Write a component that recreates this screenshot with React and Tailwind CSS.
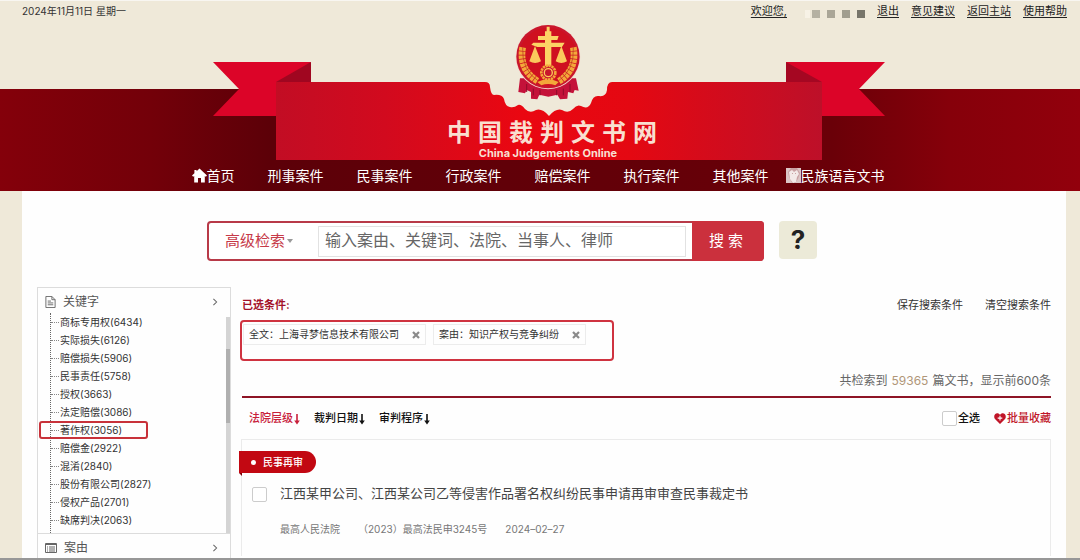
import React, { useState } from "react"

const links = ["退出", "意见建议", "返回主站", "使用帮助"]
const cases = ["刑事案件", "民事案件", "行政案件", "赔偿案件", "执行案件", "其他案件"]
const keywords = [
    ["商标专用权", 6434],
    ["实际损失", 6126],
    ["赔偿损失", 5906],
    ["民事责任", 5758],
    ["授权", 3663],
    ["法定赔偿", 3086],
    ["著作权", 3056],
    ["赔偿金", 2922],
    ["混淆", 2840],
    ["股份有限公司", 2827],
    ["侵权产品", 2701],
    ["缺席判决", 2063],
]
const title = "中国裁判文书网"

function Emblem() {
    return (
        <g transform="translate(480 10) scale(0.3333)">
            <path d="M120 205 L115 246 L135 250 L140 240 L153 246 L153 266 L172 268 L178 254 L205 260 L232 254 L240 268 L262 266 L264 246 L280 250 L284 240 L296 242 L288 205 Z" fill="#c4123a" />
            <path d="M140 222 V246 M160 236 V256 M180 240 V256 M230 240 V256 M250 236 V256 M270 222 V246" stroke="#8e0c2a" strokeWidth="3" />
            <circle cx="204" cy="141" r="97" fill="#f4d8cc" />
            <circle cx="204" cy="140" r="95" fill="#c9162c" />
            <circle cx="204" cy="140" r="87" fill="#cf1020" />
            <path d="M128 112 Q116 180 174 214" stroke="#f3a83a" strokeWidth="20" strokeDasharray="10 2" fill="none" />
            <path d="M280 112 Q292 180 236 214" stroke="#f3a83a" strokeWidth="20" strokeDasharray="10 2" fill="none" />
            <path d="M128 112 Q124 180 176 214 M280 112 Q284 180 234 214" stroke="#b5301c" strokeWidth="2" fill="none" />
            <path d="M172 216 Q204 200 236 216 L226 226 Q204 218 184 226 Z" fill="#f3a83a" />
            <path d="M200 50 H209 V64 H214 V78 H236 L232 90 H214 V98 H254 L246 111 H214 V168 H195 V111 H172 L154 104 L160 98 H195 V90 H174 V78 H195 V64 H200 Z" fill="#fcd365" />
            <path d="M165 108 L183 154 Q165 164 148 154 Z M244 108 L261 154 Q244 164 227 154 Z" fill="#fbc95c" />
            <circle cx="205" cy="188" r="21" fill="#c9162c" stroke="#f3a83a" strokeWidth="8" strokeDasharray="7 2" />
            <circle cx="205" cy="188" r="12" fill="#c9162c" stroke="#fbc95c" strokeWidth="4" />
        </g>
    )
}

function Ribbon() {
    return (
        <svg viewBox="202 22 684 138" className="h-[138px] w-[684px] [grid-area:1/1]" aria-hidden="true">
            <defs>
                <linearGradient id="band" x1="0" x2="1">
                    <stop offset="0" stopColor="#c20d24" />
                    <stop offset="0.2" stopColor="#d20a1e" />
                    <stop offset="0.45" stopColor="#ea0711" />
                    <stop offset="0.65" stopColor="#e40812" />
                    <stop offset="1" stopColor="#bd1029" />
                </linearGradient>
            </defs>
            <path d="M213 62 H311 L290 116 H213 L239 89 Z" fill="#dc0428" />
            <path d="M885 62 H786 L800 116 H885 L859 89 Z" fill="#dc0428" />
            <path d="M276 82 L311 62 V83 H276 Z" fill="#a00620" />
            <path d="M822 82 L786 62 V83 H822 Z" fill="#a50722" />
            <rect x="484" y="80" width="130" height="40" fill="#efe9d9" />
            <path
                d="M276 82 H485 Q490 82 490 87 Q491 95 494 95 Q502 94 504 99 Q505 106 510 107 Q514 108 518 105 Q521 104 525 109 Q530 114 536 110 Q542 108 549 116 Q556 108 562 110 Q568 114 573 109 Q577 104 581 106 Q588 110 591 103 Q593 95 599 96 Q606 97 607 90 Q607 82 612 82 H822 V160 H276 Z"
                fill="url(#band)"
            />
            <Emblem />
        </svg>
    )
}

function HomeIcon() {
    return (
        <svg viewBox="0 0 15 15" className="h-[15px] w-[15px]" fill="#fff" aria-hidden="true">
            <path d="M7.5 0.5 L15 7.5 L13.8 8.8 L12.8 8 V14.5 H9 V10 H6 V14.5 H2.2 V8 L1.2 8.8 L0 7.5 L2.4 5.2 V2 H4.6 V3.2 Z" />
        </svg>
    )
}

function EthnicIcon() {
    return (
        <svg viewBox="0 0 15 15" className="h-[15px] w-[15px]" aria-hidden="true">
            <rect width="15" height="15" fill="#c9a2a4" />
            <path d="M0 0 H5 L2 4 L3 9 L6 15 H0 Z M15 0 H11 L14 5 L12 11 L9 15 H15 Z" fill="#dcc6c6" />
            <path d="M3 4 L6 2 L8 4 L11 2 L13 6 L11 9 L10 14 L7 15 L4 11 Z" fill="#f3e9e8" />
            <path d="M6 6 L7 5 M9 5 L10 6" stroke="#c9a2a4" />
        </svg>
    )
}

function Arrow() {
    return (
        <svg viewBox="0 0 6 12" className="h-3 w-[6px]" fill="none" stroke="currentColor" aria-hidden="true">
            <path d="M3 1 V9" strokeWidth="1.6" />
            <path d="M0.2 7.5 H5.8 L3 11.5 Z" fill="currentColor" stroke="none" />
        </svg>
    )
}

function Chevron() {
    return (
        <svg viewBox="0 0 6 10" className="ml-auto h-2 w-[6px]" fill="none" stroke="#666" strokeWidth="1.3" aria-hidden="true">
            <path d="M1 1 L5 5 L1 9" />
        </svg>
    )
}

function Tag({ text, onRemove }) {
    return (
        <span className="flex h-[21px] items-center gap-[13px] border border-[#ececec] px-[5px] text-[#333]">
            {text}
            <button type="button" aria-label={"删除 " + text} onClick={onRemove}>
                <svg viewBox="0 0 8 8" className="h-2 w-2" stroke="#8a8a8a" strokeWidth="2.2" aria-hidden="true">
                    <path d="M1 1 L7 7 M7 1 L1 7" />
                </svg>
            </button>
        </span>
    )
}

export default function App() {
    const [tags, setTags] = useState(["全文：上海寻梦信息技术有限公司", "案由：知识产权与竞争纠纷"])

    return (
        <div className="flex min-h-screen flex-col border-t border-b-2 border-t-[#f8f6f1] border-b-[#979797] bg-[#efe9d9] font-['Inter','Noto_Sans_CJK_SC',sans-serif] text-[10px] text-[#333]">
            <header className="bg-[linear-gradient(to_bottom,#efe9d9_88px,transparent_88px),linear-gradient(to_right,#84000a,#730009_14%,#5c0008_25%,#640008_60%,#6a0008_77%,#86000a_88%,#92000c)]">
                <div className="flex h-[21px] items-center pr-[13px] pl-[22px]">
                    <span className="flex-1">2024年11月11日 星期一</span>
                    <div className="flex items-center gap-3 text-[11px] text-[#222]">
                        <a href="#user" className="underline underline-offset-2">欢迎您,</a>
                        <span className="flex items-center gap-[7px] pt-1 pl-[6px]">
                            <i className="-mr-[5px] h-2 w-[5px] bg-[#f7f2e6]" />
                            <i className="h-2 w-2 bg-[#b5b1a2]" />
                            <i className="h-2 w-2 bg-[#aaa697]" />
                            <i className="h-2 w-2 bg-[#a19e8f]" />
                            <i className="h-2 w-2 bg-[#77756a]" />
                        </span>
                        {links.map(link => (
                            <a key={link} href="#top" className="underline underline-offset-2">{link}</a>
                        ))}
                    </div>
                </div>
                <div className="pr-[14px] pl-[22px]">
                    <div className="grid justify-center">
                        <Ribbon />
                        <div className="flex flex-col items-center self-end pl-4 text-[#f9dfd0] [grid-area:1/1]">
                            <h1 className="flex gap-[7px] text-2xl leading-[26px] font-bold" aria-label={title}>
                                {title.split("").map(char => <span key={char}>{char}</span>)}
                            </h1>
                            <p className="pr-2 text-[11px] leading-[14px] font-bold">China Judgements Online</p>
                        </div>
                    </div>
                    <nav className="flex h-[31px] items-center justify-center gap-[33px] pr-3 text-sm text-white">
                        <a href="#home" className="flex items-center"><HomeIcon />首页</a>
                        {cases.map(item => <a key={item} href="#case">{item}</a>)}
                        <a href="#ethnic" className="-ml-4 flex items-center"><EthnicIcon />民族语言文书</a>
                    </nav>
                </div>
            </header>

            <main className="mr-[14px] ml-[22px] flex flex-1 flex-col bg-[#fefefe] px-[15px] pt-[30px]">
                <form className="flex justify-center gap-[15px] pr-16" onSubmit={ev => ev.preventDefault()}>
                    <div className="flex h-10 w-[557px] items-center rounded border-2 border-[#b83a48] bg-white">
                        <label className="flex flex-1 items-center pl-4 text-[#c63a48]">
                            <select aria-label="检索方式" className="appearance-none text-[15px] text-[#c63a48]">
                                <option>高级检索</option>
                            </select>
                            <svg viewBox="0 0 8 5" className="h-[5px] w-2" fill="#999" aria-hidden="true"><path d="M1 0 H7 L4 4 Z" /></svg>
                        </label>
                        <input
                            type="text"
                            aria-label="检索关键词"
                            placeholder="输入案由、关键词、法院、当事人、律师"
                            className="mr-[6px] h-[31px] w-[368px] border border-[#e2e2e2] px-[6px] pb-[3px] text-base placeholder:text-[#666]"
                        />
                        <button className="-my-[2px] -mr-[2px] h-10 w-[72px] rounded-r-sm bg-[#cb303d] pr-1 text-[15px] text-white">搜 索</button>
                    </div>
                    <button type="button" className="h-[38px] w-[38px] rounded-sm bg-[#ecead8] text-[26px] leading-none font-bold text-[#222]">?</button>
                </form>

                <div className="flex flex-1 gap-[9px] pt-[26px]">
                    <aside className="w-[194px] border border-b-0 border-[#dcdcdc]">
                        <h2 className="flex h-[25px] items-center gap-[7px] pt-[3px] pr-3 pl-[7px] text-xs text-[#555]">
                            <svg viewBox="0 0 11 13" className="h-3 w-[11px]" fill="none" stroke="#666" aria-hidden="true">
                                <path d="M0.5 0.5 H7 L10.5 4 V12.5 H0.5 Z M7 0.5 V4 H10.5 M2.5 5.5 H6 M2.5 7.5 H8.5 M2.5 9.5 H8.5" />
                            </svg>
                            关键字
                            <Chevron />
                        </h2>
                        <div className="flex h-[220px]">
                            <ul className="ml-3 flex-1 self-stretch border-l border-dotted border-[#666]">
                                {keywords.map(([name, count]) => (
                                    <li key={name} className="relative flex h-[18px] items-center gap-px before:w-[8px] before:border-t before:border-dotted before:border-[#888]">
                                        <a href="#kw">{name}({count})</a>
                                        {name === "著作权" && <span className="absolute -left-3 h-[18px] w-[109px] rounded-[3px] border-2 border-[#c8323a]" />}
                                    </li>
                                ))}
                            </ul>
                            <div className="mt-1 flex w-1 flex-col bg-[#d4d4d4]">
                                <span className="mt-8 h-[74px] bg-[#b0b0b0]" />
                            </div>
                        </div>
                        <h2 className="flex h-[25px] items-center gap-[7px] border-t border-[#dcdcdc] pt-1 pr-3 pl-[7px] text-xs text-[#555]">
                            <svg viewBox="0 0 12 10" className="h-[10px] w-3" fill="none" stroke="#666" aria-hidden="true">
                                <path d="M0.5 0.5 H11.5 V9.5 H0.5 Z M0.5 1.5 H11.5 M2 4 H3 M4 4 H10 M2 6 H3 M4 6 H10 M2 8 H3 M4 8 H10" />
                            </svg>
                            案由
                            <Chevron />
                        </h2>
                    </aside>

                    <section className="min-w-0 flex-1 pt-1">
                        <div className="flex h-[29px] items-center gap-[22px] pl-[2px]">
                            <b className="flex-1 text-[11px] text-[#a3122a]">已选条件:</b>
                            <button type="button" className="text-[11px]">保存搜索条件</button>
                            <button type="button" className="text-[11px]" onClick={() => setTags([])}>清空搜索条件</button>
                        </div>
                        <div className="flex h-[41px] w-[374px] items-start gap-[7px] rounded border-2 border-[#cf3340] p-px pt-[2px]">
                            {tags.map(tag => (
                                <Tag key={tag} text={tag} onRemove={() => setTags(tags.filter(t => t !== tag))} />
                            ))}
                        </div>
                        <p className="ml-[2px] flex h-[37px] items-center justify-end gap-1 border-b-2 border-[#8e1425] pt-1 text-xs text-[#666]">
                            共检索到 <span className="text-[#b09678]">59365</span> 篇文书，显示前600条
                        </p>
                        <div className="flex h-[41px] items-center gap-[14px] pl-[9px] text-[11px] font-medium text-[#111]">
                            <button type="button" className="flex items-center gap-px text-[#c8203a]">法院层级<Arrow /></button>
                            <button type="button" className="flex items-center gap-px">裁判日期<Arrow /></button>
                            <button type="button" className="flex flex-1 items-center gap-px">审判程序<Arrow /></button>
                            <label className="flex items-center gap-px">
                                <input type="checkbox" className="h-[15px] w-[15px] appearance-none rounded-[2px] border border-[#ccc] bg-white" />
                                全选
                            </label>
                            <button type="button" className="flex items-center gap-px text-[#c01528]">
                                <svg viewBox="0 0 12 11" className="h-[11px] w-3" aria-hidden="true">
                                    <path d="M6 11 L1 6 C-1.2 3 1.5 -0.8 4.5 0.6 L6 1.8 L7.5 0.6 C10.5 -0.8 13.2 3 11 6 Z" fill="#c01528" />
                                    <path d="M6 2.8 V7.4 M3.7 5.1 H8.3" stroke="#fff" strokeWidth="1.1" />
                                </svg>
                                批量收藏
                            </button>
                        </div>
                        <article className="ml-px border border-b-0 border-[#ebebeb] pt-[11px] pb-[10px]">
                            <div className="-ml-[3px]">
                                <span className="flex h-[22px] w-[77px] items-center gap-[7px] rounded-r-full bg-[#c20812] pl-3 font-medium text-white">
                                    <i className="h-[5px] w-[5px] rounded-full bg-white" />
                                    民事再审
                                </span>
                                <svg viewBox="0 0 3 3" className="block h-[3px] w-[3px]" aria-hidden="true"><path d="M0 0 H3 V3 Z" fill="#7d0008" /></svg>
                            </div>
                            <label className="flex h-9 items-center gap-[13px] pl-[10px] text-[13px] text-[#444]">
                                <input type="checkbox" className="h-[15px] w-[15px] appearance-none rounded-[2px] border border-[#ccc] bg-white" />
                                江西某甲公司、江西某公司乙等侵害作品署名权纠纷民事申请再审审查民事裁定书
                            </label>
                            <p className="flex h-[34px] items-center gap-[18px] pl-[38px] text-[#777]">
                                <span>最高人民法院</span>
                                <span>（2023）最高法民申3245号</span>
                                <span>2024–02–27</span>
                            </p>
                        </article>
                    </section>
                </div>
            </main>
        </div>
    )
}
